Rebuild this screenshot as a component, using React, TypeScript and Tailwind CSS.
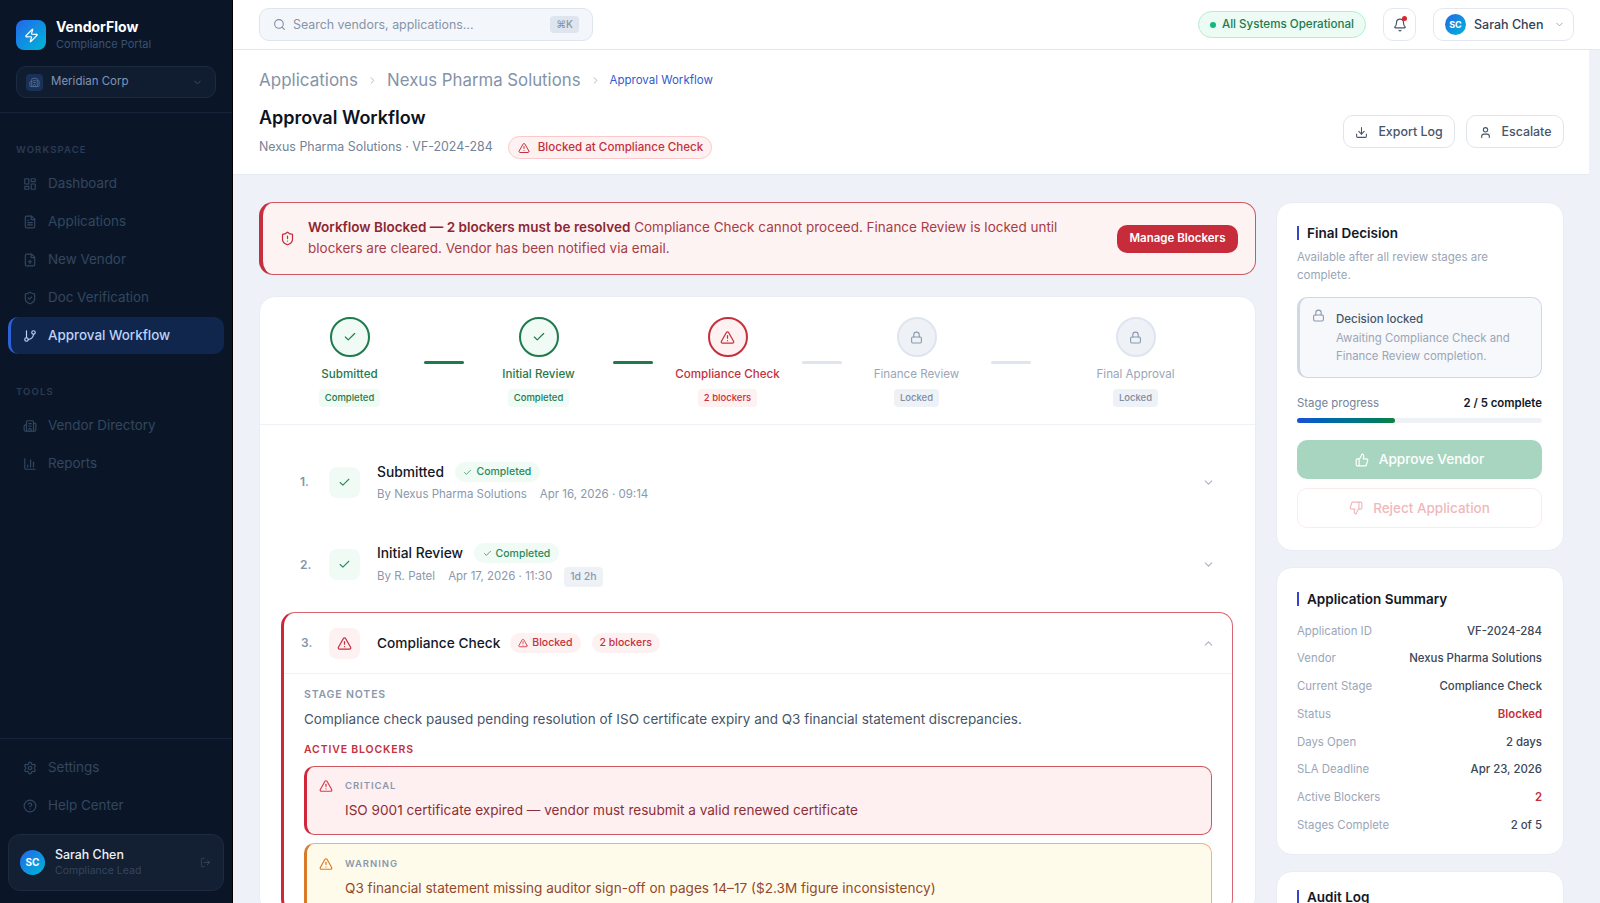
import {
  AlertTriangle,
  BarChart3,
  Bell,
  Building2,
  Check,
  ChevronDown,
  ChevronRight,
  ChevronUp,
  CircleHelp,
  Download,
  FilePlus,
  FileText,
  GitBranch,
  LayoutDashboard,
  Lock,
  LogOut,
  Search,
  Settings,
  ShieldAlert,
  ShieldCheck,
  ThumbsDown,
  ThumbsUp,
  User,
  Zap,
} from 'lucide-react'
import type { ReactNode } from 'react'

function NavItem({ icon, label, active }: { icon: ReactNode; label: string; active?: boolean }) {
  return (
    <div
      className={
        active
          ? 'mx-2 flex h-[37px] items-center gap-[11px] rounded-[10px] border-l-[3px] border-[#2f62d6] bg-[#10264d] pl-[12px] text-[13.4px] font-medium text-[#bcd2f7]'
          : 'mx-2 flex h-[37px] items-center gap-[11px] pl-[15px] text-[13.4px] text-[#33465f]'
      }
    >
      {icon}
      <span>{label}</span>
    </div>
  )
}

function Sidebar() {
  return (
    <aside className="flex h-full w-[233px] shrink-0 flex-col border-r border-black bg-[#0a1628]">
      <div className="border-b border-[#16233a] px-4 pb-[14px] pt-[18px]">
        <div className="flex items-center gap-[10px]">
          <div className="flex h-[30px] w-[30px] items-center justify-center rounded-lg bg-gradient-to-br from-[#2563eb] to-[#06b6d4]">
            <Zap size={15} className="text-white" />
          </div>
          <div>
            <div className="text-[14px] font-bold leading-[18px] text-white">VendorFlow</div>
            <div className="text-[11px] leading-[16px] text-[#3b5170]">Compliance Portal</div>
          </div>
        </div>
        <div className="mt-[14px] flex h-8 items-center rounded-[10px] border border-[#1c2a40] bg-[#101d31] pl-[9px] pr-3">
          <div className="flex h-[17px] w-[17px] items-center justify-center rounded bg-[#1a3157]">
            <Building2 size={11} className="text-[#4f6d96]" />
          </div>
          <span className="ml-2 flex-1 text-[11.5px] text-[#8195b3]">Meridian Corp</span>
          <ChevronDown size={11} className="text-[#3f5470]" />
        </div>
      </div>

      <div className="flex-1 pt-[31px]">
        <div className="px-4 text-[9.5px] font-semibold leading-[12px] tracking-[0.12em] text-[#2a3b53]">WORKSPACE</div>
        <div className="mt-[9px] flex flex-col gap-px">
          <NavItem icon={<LayoutDashboard size={14} />} label="Dashboard" />
          <NavItem icon={<FileText size={14} />} label="Applications" />
          <NavItem icon={<FilePlus size={14} />} label="New Vendor" />
          <NavItem icon={<ShieldCheck size={14} />} label="Doc Verification" />
          <NavItem icon={<GitBranch size={14} />} label="Approval Workflow" active />
        </div>
        <div className="mt-[32px] px-4 text-[9.5px] font-semibold leading-[12px] tracking-[0.12em] text-[#2a3b53]">TOOLS</div>
        <div className="mt-[9px] flex flex-col gap-px">
          <NavItem icon={<Building2 size={14} />} label="Vendor Directory" />
          <NavItem icon={<BarChart3 size={14} />} label="Reports" />
        </div>
      </div>

      <div className="border-t border-[#16233a] pb-[12px] pt-[10px]">
        <div className="flex flex-col gap-px">
          <NavItem icon={<Settings size={14} />} label="Settings" />
          <NavItem icon={<CircleHelp size={14} />} label="Help Center" />
        </div>
        <div className="mx-2 mt-[10px] flex h-[57px] items-center gap-[10px] rounded-[12px] border border-[#1e2b3f] bg-[#131f32] pl-[11px] pr-3">
          <div className="flex h-[25px] w-[25px] items-center justify-center rounded-full bg-gradient-to-br from-[#2563eb] to-[#06b6d4] text-[10px] font-bold text-white">
            SC
          </div>
          <div className="flex-1">
            <div className="text-[12.4px] font-medium leading-[17px] text-[#eef2f8]">Sarah Chen</div>
            <div className="text-[10.5px] leading-[16px] text-[#33465f]">Compliance Lead</div>
          </div>
          <LogOut size={11} className="text-[#33465f]" />
        </div>
      </div>
    </aside>
  )
}

function TopBar() {
  return (
    <header className="flex h-[50px] shrink-0 items-center border-b border-[#e3e8f0] bg-white pl-[26px] pr-[26px]">
      <div className="flex h-[33px] w-[334px] items-center rounded-[10px] border border-[#dfe5ee] bg-[#f3f6fa] pl-[13px] pr-[13px]">
        <Search size={13} className="text-[#7f8ea3]" />
        <span className="ml-[7px] flex-1 pt-px text-[12.4px] text-[#8694a8]">Search vendors, applications...</span>
        <span className="flex h-[17px] items-center rounded bg-[#dfe5ee] px-1.5 text-[10px] font-medium text-[#8694a8]">⌘K</span>
      </div>
      <div className="ml-auto flex items-center">
        <div className="flex h-[27px] items-center gap-[6px] rounded-full border border-[#b6ecd0] bg-[#ecfbf3] px-[11px] pt-px text-[11.6px] font-medium text-[#1d7a52]">
          <span className="h-[6px] w-[6px] rounded-full bg-[#10b981]" />
          All Systems Operational
        </div>
        <div className="relative ml-[17px] flex h-[33px] w-[33px] items-center justify-center rounded-[10px] border border-[#e3e8f0]">
          <Bell size={14} className="text-[#475569]" />
          <span className="absolute right-[8px] top-[7px] h-[5px] w-[5px] rounded-full bg-[#dc2626]" />
        </div>
        <div className="ml-[17px] flex h-[33px] w-[141px] items-center rounded-[10px] border border-[#e3e8f0] pl-[11px]">
          <div className="flex h-[21px] w-[21px] items-center justify-center rounded-full bg-gradient-to-br from-[#2563eb] to-[#06b6d4] text-[9px] font-bold text-white">
            SC
          </div>
          <span className="ml-2 pt-px text-[12.5px] font-medium text-[#334155]">Sarah Chen</span>
          <ChevronDown size={11} className="ml-[11px] text-[#94a3b8]" />
        </div>
      </div>
    </header>
  )
}

function PageHeader() {
  return (
    <div className="mr-[11px] flex h-[125px] shrink-0 items-end justify-between border-b border-[#e6ebf2] bg-white pb-[15px] pl-[26px] pr-[25px]">
      <div>
        <div className="flex items-center text-[#8493a8]">
          <span className="text-[17px]">Applications</span>
          <ChevronRight size={11} className="mx-[9px] text-[#a7b3c4]" />
          <span className="text-[16.8px]">Nexus Pharma Solutions</span>
          <ChevronRight size={11} className="mx-[9px] text-[#a7b3c4]" />
          <span className="text-[11.5px] text-[#2f5bd0]">Approval Workflow</span>
        </div>
        <h1 className="mt-[12px] text-[18px] font-semibold leading-[26px] text-[#0c1322]">Approval Workflow</h1>
        <div className="mt-[5px] flex items-center">
          <span className="text-[12.4px] text-[#748398]">Nexus Pharma Solutions · VF-2024-284</span>
          <span className="ml-[15px] flex h-[23px] items-center gap-[8px] rounded-full border border-[#fbc9c9] bg-[#fef1f1] pl-[9px] pr-2 text-[11.6px] font-medium text-[#c5303c]">
            <AlertTriangle size={12} />
            Blocked at Compliance Check
          </span>
        </div>
      </div>
      <div className="mb-[11px] flex gap-[11px]">
        <button className="flex h-[33px] w-[112px] items-center justify-center gap-[10px] rounded-[10px] border border-[#dfe5ee] bg-white pt-px text-[12.4px] font-medium text-[#475569]">
          <Download size={13} />
          Export Log
        </button>
        <button className="flex h-[33px] w-[98px] items-center justify-center gap-[10px] rounded-[10px] border border-[#dfe5ee] bg-white pt-px text-[12.4px] font-medium text-[#475569]">
          <User size={13} />
          Escalate
        </button>
      </div>
    </div>
  )
}

const steps = [
  { label: 'Submitted', tag: 'Completed', kind: 'done' },
  { label: 'Initial Review', tag: 'Completed', kind: 'done' },
  { label: 'Compliance Check', tag: '2 blockers', kind: 'blocked' },
  { label: 'Finance Review', tag: 'Locked', kind: 'locked' },
  { label: 'Final Approval', tag: 'Locked', kind: 'locked' },
]

function Step({ label, tag, kind, last }: { label: string; tag: string; kind: string; last?: boolean }) {
  return (
    <div className={last ? 'flex flex-1 flex-col items-center' : 'flex w-[149px] flex-col items-center'}>
      {kind === 'done' && (
        <div className="flex h-10 w-10 items-center justify-center rounded-full border-2 border-[#1f7a4d] bg-[#effbf4] text-[#1f7a4d]">
          <Check size={14} />
        </div>
      )}
      {kind === 'blocked' && (
        <div className="flex h-10 w-10 items-center justify-center rounded-full border-2 border-[#c5303c] bg-[#fef1f1] text-[#c5303c]">
          <AlertTriangle size={15} />
        </div>
      )}
      {kind === 'locked' && (
        <div className="flex h-10 w-10 items-center justify-center rounded-full border-2 border-[#dfe5ee] bg-[#eef2f7] text-[#8a98ad]">
          <Lock size={13} />
        </div>
      )}
      {kind === 'done' && <div className="mt-[8px] text-[11.6px] font-medium leading-[18px] text-[#1f7a4d]">{label}</div>}
      {kind === 'blocked' && <div className="mt-[8px] text-[11.6px] font-medium leading-[18px] text-[#c5303c]">{label}</div>}
      {kind === 'locked' && <div className="mt-[8px] text-[11.6px] leading-[18px] text-[#9aa6b8]">{label}</div>}
      {kind === 'done' && <div className="mt-[6px] flex h-[18px] items-center rounded bg-[#effbf4] px-[6px] text-[9.5px] font-medium text-[#1f7a4d]">{tag}</div>}
      {kind === 'blocked' && <div className="mt-[6px] flex h-[18px] items-center rounded bg-[#fef1f1] px-[6px] text-[9.5px] font-medium text-[#c5303c]">{tag}</div>}
      {kind === 'locked' && <div className="mt-[6px] flex h-[18px] items-center rounded bg-[#eef2f7] px-[6px] text-[9.5px] font-medium text-[#7e8ca0]">{tag}</div>}
    </div>
  )
}

function Stepper() {
  return (
    <div className="flex h-[128px] items-start border-b border-[#eef2f7] px-[15px] pt-[20px]">
      {steps.map((s, i) => (
        <div key={s.label} className={i === 4 ? 'flex flex-1' : 'flex'}>
          <Step label={s.label} tag={s.tag} kind={s.kind} last={i === 4} />
          {i < 4 && (
            <div className={i < 2 ? 'mt-[44px] h-[2.5px] w-10 rounded bg-[#1f7a4d]' : 'mt-[44px] h-[2.5px] w-10 rounded bg-[#dfe5ee]'} />
          )}
        </div>
      ))}
    </div>
  )
}

function DonePill() {
  return (
    <span className="ml-[11px] flex h-[20px] items-center gap-1 rounded-full bg-[#effbf4] px-[8.5px] text-[10.5px] font-medium text-[#2a8a5a]">
      <Check size={9} />
      Completed
    </span>
  )
}

function StageRow({ num, name, children }: { num: string; name: string; children: ReactNode }) {
  return (
    <div className="mx-[21px] flex h-[82.6px] items-center pl-[19px] pr-[19px]">
      <span className="w-[29px] text-[12px] font-semibold text-[#8494ab]">{num}</span>
      <div className="flex h-[31px] w-[31px] items-center justify-center rounded-lg bg-[#effbf4] text-[#2a8a5a]">
        <Check size={13} />
      </div>
      <div className="ml-[17px] flex-1">
        <div className="flex items-center">
          <span className="text-[13.8px] font-medium text-[#111827]">{name}</span>
          <DonePill />
        </div>
        <div className="mt-[3px] flex items-center text-[11.5px] text-[#8a98ad]">{children}</div>
      </div>
      <ChevronDown size={13} className="text-[#a7b3c4]" />
    </div>
  )
}

function BlockedStage() {
  return (
    <div className="ml-[21px] mr-[22px] rounded-[14px] border-[1.5px] border-l-[3px] border-[#d9666f] border-l-[#d2253a]">
      <div className="flex h-[61px] items-center border-b border-[#eef2f7] pl-[17px] pr-[17px]">
        <span className="w-[28px] text-[12px] font-semibold text-[#8494ab]">3.</span>
        <div className="flex h-[31px] w-[31px] items-center justify-center rounded-lg bg-[#fef1f1] text-[#c5303c]">
          <AlertTriangle size={15} />
        </div>
        <span className="ml-[17px] text-[13.7px] font-medium text-[#111827]">Compliance Check</span>
        <span className="ml-[10px] flex h-[20px] items-center gap-1 rounded-full bg-[#fef1f1] px-[8px] text-[10.5px] font-medium text-[#c5303c]">
          <AlertTriangle size={10} />
          Blocked
        </span>
        <span className="ml-[11px] flex h-[20px] items-center rounded-full bg-[#fef1f1] px-[8px] text-[10.5px] font-medium text-[#c5303c]">2 blockers</span>
        <ChevronUp size={13} className="ml-auto text-[#a7b3c4]" />
      </div>
      <div className="pl-[20px] pr-[20px] pt-[14px]">
        <div className="text-[10.5px] font-semibold leading-[14px] tracking-[0.08em] text-[#8a98ad]">STAGE NOTES</div>
        <p className="mt-[6px] text-[13.5px] leading-[22px] text-[#475569]">
          Compliance check paused pending resolution of ISO certificate expiry and Q3 financial statement discrepancies.
        </p>
        <div className="mt-[13px] text-[10.5px] font-semibold leading-[14px] tracking-[0.08em] text-[#c5303c]">ACTIVE BLOCKERS</div>
        <div className="mt-[9px] flex h-[69px] flex-col justify-center rounded-[10px] border border-l-[3px] border-[#d2565f] border-l-[#d2253a] bg-[#feeff0] pb-[2px] pl-[12px]">
          <div className="flex items-center">
            <AlertTriangle size={14} className="text-[#d2404c]" />
            <span className="ml-[12px] text-[9.5px] font-semibold tracking-[0.1em] text-[#8a98ad]">CRITICAL</span>
          </div>
          <p className="ml-[26px] mt-[7px] text-[13.6px] leading-[20px] text-[#8c2f38]">
            ISO 9001 certificate expired — vendor must resubmit a valid renewed certificate
          </p>
        </div>
        <div className="mt-[8px] flex h-[69px] flex-col justify-center rounded-[10px] border border-l-[3px] border-[#e9b08a] border-l-[#d97a26] bg-[#fffbeb] pl-[12px]">
          <div className="flex items-center">
            <AlertTriangle size={14} className="text-[#d97a26]" />
            <span className="ml-[12px] text-[9.5px] font-semibold tracking-[0.1em] text-[#8a98ad]">WARNING</span>
          </div>
          <p className="ml-[26px] mt-[7px] text-[13.6px] leading-[20px] text-[#92492a]">
            Q3 financial statement missing auditor sign-off on pages 14–17 ($2.3M figure inconsistency)
          </p>
        </div>
      </div>
    </div>
  )
}

function CardTitle({ children }: { children: ReactNode }) {
  return (
    <div className="flex h-5 items-center gap-2">
      <span className="h-[14px] w-[2px] bg-[#3346c8]" />
      <span className="text-[13.5px] font-semibold text-[#111827]">{children}</span>
    </div>
  )
}

function FinalDecision() {
  return (
    <div className="h-[349px] shrink-0 rounded-[16px] border border-[#e9edf3] bg-white pl-[20px] pr-[21px] pt-[20px]">
      <CardTitle>Final Decision</CardTitle>
      <p className="mt-[5px] text-[11.5px] leading-[18px] text-[#9aa6b8]">Available after all review stages are complete.</p>
      <div className="mt-[13px] flex h-[81px] gap-[11px] rounded-[10px] border border-l-[3px] border-[#cfd8e5] bg-[#f6f8fb] pl-[12px] pt-[12px]">
        <Lock size={13} className="mt-[-1px] shrink-0 text-[#8a98ad]" />
        <div>
          <div className="text-[11.5px] font-medium leading-[18.5px] text-[#475569]">Decision locked</div>
          <div className="text-[11.4px] leading-[18.5px] text-[#9aa6b8]">
            Awaiting Compliance Check and
            <br />
            Finance Review completion.
          </div>
        </div>
      </div>
      <div className="mt-[16px] flex items-center justify-between text-[11.4px] leading-[18px]">
        <span className="text-[#748398]">Stage progress</span>
        <span className="font-semibold text-[#111827]">2 / 5 complete</span>
      </div>
      <div className="mt-[6px] h-[5px] rounded-full bg-[#eef2f7]">
        <div className="h-full w-[40%] rounded-full bg-gradient-to-r from-[#1d4ed8] to-[#15803d]" />
      </div>
      <button className="mt-[17px] flex h-[39px] w-full items-center justify-center gap-[10px] rounded-[10px] bg-[#a8d5c0] text-[13.6px] font-medium text-white">
        <ThumbsUp size={14} />
        Approve Vendor
      </button>
      <button className="mt-[9px] flex h-[40px] w-full items-center justify-center gap-[10px] rounded-[10px] border border-[#fdeaea] bg-white text-[13.5px] font-medium text-[#f0b8bc]">
        <ThumbsDown size={14} />
        Reject Application
      </button>
    </div>
  )
}

const summary = [
  ['Application ID', 'VF-2024-284'],
  ['Vendor', 'Nexus Pharma Solutions'],
  ['Current Stage', 'Compliance Check'],
  ['Status', 'Blocked'],
  ['Days Open', '2 days'],
  ['SLA Deadline', 'Apr 23, 2026'],
  ['Active Blockers', '2'],
  ['Stages Complete', '2 of 5'],
]

function ApplicationSummary() {
  return (
    <div className="h-[288px] shrink-0 rounded-[16px] border border-[#e9edf3] bg-white pl-[20px] pr-[21px] pt-[21px]">
      <CardTitle>Application Summary</CardTitle>
      <div className="mt-[8.5px]">
        {summary.map(([k, v]) => (
          <div key={k} className="flex h-[27.7px] items-center justify-between text-[11.4px]">
            <span className="text-[#9aa6b8]">{k}</span>
            <span className={k === 'Status' || k === 'Active Blockers' ? 'font-semibold text-[#c5303c]' : 'font-medium text-[#3b4657]'}>{v}</span>
          </div>
        ))}
      </div>
    </div>
  )
}

export default function App() {
  return (
    <div className="flex h-[903px] w-[1600px] overflow-hidden bg-[#eef2f8] font-['Inter',sans-serif]">
      <Sidebar />
      <div className="flex min-w-0 flex-1 flex-col">
        <TopBar />
        <PageHeader />
        <div className="flex min-h-0 flex-1 gap-[20px] overflow-hidden pl-[26px] pr-[36px] pt-[27px]">
          <div className="flex w-[997px] shrink-0 flex-col gap-[21px]">
            <div className="flex h-[73px] shrink-0 items-center rounded-[14px] border border-l-4 border-[#d2565f] border-l-[#c5303c] bg-[#fef3f3] pl-[17px] pr-[17px]">
              <ShieldAlert size={15} className="shrink-0 text-[#c5303c]" />
              <p className="ml-[13px] flex-1 pb-[2px] text-[13.5px] leading-[20.5px] text-[#a83c46]">
                <span className="font-semibold text-[#8c2732]">Workflow Blocked — 2 blockers must be resolved</span> Compliance Check cannot proceed. Finance Review is locked until blockers are cleared. Vendor has been notified via email.
              </p>
              <button className="ml-[30px] flex h-[28px] w-[121px] shrink-0 items-center justify-center rounded-[10px] bg-[#c72c3a] text-[11.5px] font-semibold text-white">
                Manage Blockers
              </button>
            </div>
            <div className="shrink-0 rounded-[16px] border border-[#e9edf3] bg-white">
              <Stepper />
              <div className="pt-[16px]">
                <StageRow num="1." name="Submitted">
                  <span>By Nexus Pharma Solutions</span>
                  <span className="ml-[13px]">Apr 16, 2026 · 09:14</span>
                </StageRow>
                <StageRow num="2." name="Initial Review">
                  <span>By R. Patel</span>
                  <span className="ml-[13px]">Apr 17, 2026 · 11:30</span>
                  <span className="ml-[12px] flex h-[20px] items-center rounded bg-[#eef2f7] px-[6px] text-[10.5px] font-medium">1d 2h</span>
                </StageRow>
                <div className="mt-[6px]">
                  <BlockedStage />
                </div>
              </div>
            </div>
          </div>
          <div className="flex w-[288px] shrink-0 flex-col gap-[16px]">
            <FinalDecision />
            <ApplicationSummary />
            <div className="h-[100px] shrink-0 rounded-[16px] border border-[#e9edf3] bg-white pl-[20px] pr-[21px] pt-[15px]">
              <CardTitle>Audit Log</CardTitle>
            </div>
          </div>
        </div>
      </div>
    </div>
  )
}
